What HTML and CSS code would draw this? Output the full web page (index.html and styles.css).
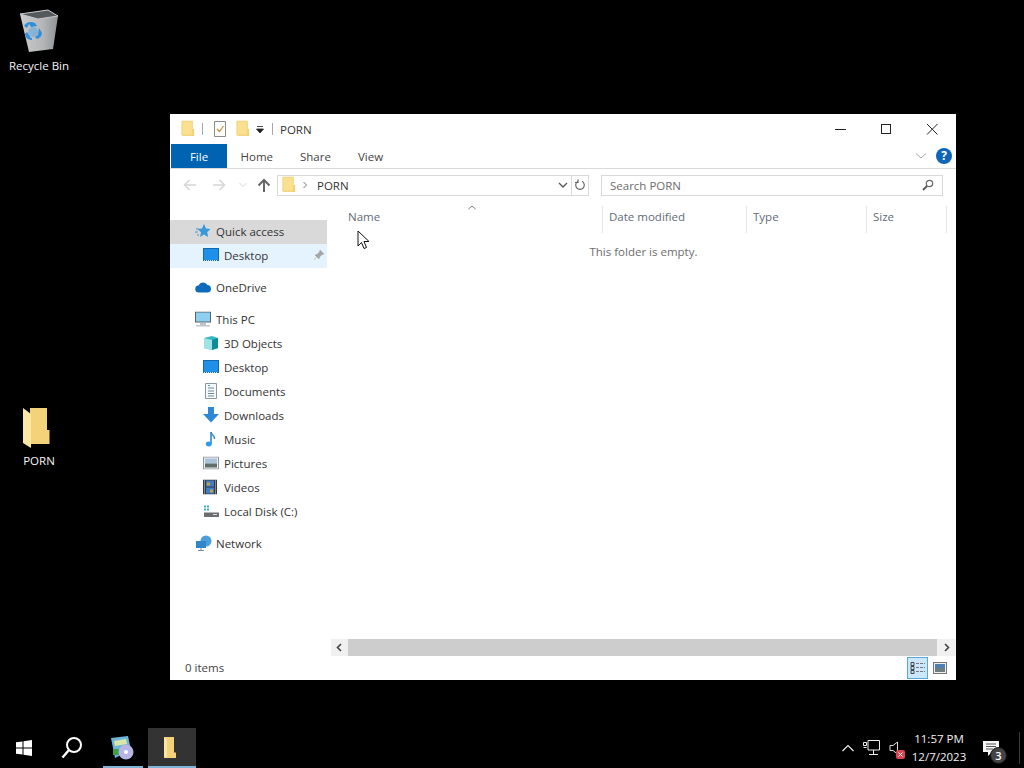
FILE: index.html
```html
<!DOCTYPE html>
<html lang="en">
<head>
  <meta charset="UTF-8" />
  <title>PORN - File Explorer</title>
  <link rel="stylesheet" href="styles.css">
</head>
<body>
  <svg class="defs" width="0" height="0">
    <symbol id="folder" viewBox="0 0 16 20">
      <path d="M1 1h12v16H1z" fill="#fbe08f" stroke="#e9c868" stroke-width=".8"/>
      <path d="M13 10h2v8H3l-2-1h12z" fill="#f3cf72"/>
    </symbol>
    <symbol id="screen" viewBox="0 0 16 14">
      <rect x=".5" y=".5" width="15" height="12" fill="#1e90ea" stroke="#1668a8"/>
      <path d="M1 12.500h14" stroke="#cfe6f7" stroke-dasharray="1 1"/>
    </symbol>
    <linearGradient id="bin" x1="0" x2="1" y1="0" y2="0">
      <stop offset="0" stop-color="#c9cbcd"/>
      <stop offset=".6" stop-color="#b4b6b8"/>
      <stop offset="1" stop-color="#8f9294"/>
    </linearGradient>
  </svg>

  <div class="desk-icon recycle">
    <svg width="40" height="44" viewBox="0 0 40 44">
      <path d="M1 5 29 1l10 6-5 33-24 3z" fill="url(#bin)"/>
      <path d="M1 5 29 1l10 6-20 3z" fill="#55595c" stroke="#c4c6c8"/>
      <path d="M5 17c2-4 7-5 11-3l2 3-6 1-2-3-2 4zM20 19l3 5c0 3-2 5-5 6l-2-2 3-2zM13 31c-4 0-7-3-7-6l2-2 4 6h1z" fill="#2f8fdc"/>
      <circle cx="14" cy="23" r="5" fill="#5aa9e6" opacity=".55"/>
    </svg>
    <span>Recycle Bin</span>
  </div>

  <div class="desk-icon porn">
    <svg width="28" height="40" viewBox="0 0 28 40">
      <path d="M8 0h17v22h2.500v14H8z" fill="#f4d27a"/>
      <path d="M1 0l8 6v34l-8-5z" fill="#fbe6a2"/>
    </svg>
    <span>PORN</span>
  </div>

  <div class="window">
    <div class="titlebar">
      <svg class="qa-folder" width="14" height="18"><use href="#folder"/></svg>
      <i class="qa-sep"></i>
      <svg class="qa-check" width="14" height="18" viewBox="0 0 14 18">
        <path d="M1.500 1.500h11v15h-11z" fill="#fff" stroke="#8b8b8b"/>
        <path d="M4 9l2.500 2.500L10.500 6" fill="none" stroke="#c98b2e" stroke-width="1.200"/>
      </svg>
      <svg class="qa-folder2" width="14" height="18"><use href="#folder"/></svg>
      <svg class="qa-drop" width="8" height="9" viewBox="0 0 8 9"><path d="M1 1.500h6M0.500 4h7L4 8z" stroke="#222" fill="#222" stroke-width=".8"/></svg>
      <i class="qa-sep qa-sep2"></i>
      <span class="title">PORN</span>
      <div class="controls">
        <svg width="46" height="30" viewBox="0 0 46 30"><path d="M18 15.500h11" stroke="#222"/></svg>
        <svg width="46" height="30" viewBox="0 0 46 30"><rect x="18.500" y="10.500" width="9" height="9" fill="none" stroke="#222"/></svg>
        <svg width="46" height="30" viewBox="0 0 46 30"><path d="M18 10l10.500 10.500M28.500 10 18 20.500" stroke="#222"/></svg>
      </div>
    </div>

    <div class="ribbon">
      <span class="tab file">File</span>
      <span class="tab">Home</span>
      <span class="tab">Share</span>
      <span class="tab">View</span>
      <svg class="collapse" width="12" height="8" viewBox="0 0 12 8"><path d="M1 1.500 6 6l5-4.500" fill="none" stroke="#a9a9a9"/></svg>
      <span class="help">?</span>
    </div>

    <div class="addressbar">
      <svg class="nav-btn" width="16" height="14" viewBox="0 0 16 14"><path d="M14 7H3M7.500 2 2.500 7l5 5" fill="none" stroke="#d6d6d6" stroke-width="1.500"/></svg>
      <svg class="nav-btn next" width="16" height="14" viewBox="0 0 16 14"><path d="M2 7h11M8.500 2l5 5-5 5" fill="none" stroke="#d6d6d6" stroke-width="1.500"/></svg>
      <svg class="nav-btn drop" width="8" height="6" viewBox="0 0 8 6"><path d="M.5 1 4 4.500 7.500 1" fill="none" stroke="#d6d6d6"/></svg>
      <svg class="nav-btn up" width="14" height="14" viewBox="0 0 14 14"><path d="M7 14V2M1.500 7.500 7 2l5.500 5.500" fill="none" stroke="#666" stroke-width="2"/></svg>
      <div class="address">
        <svg width="14" height="18"><use href="#folder"/></svg>
        <svg class="crumb" width="6" height="8" viewBox="0 0 6 8"><path d="M1.500 1 4.500 4l-3 3" fill="none" stroke="#777"/></svg>
        <span>PORN</span>
        <svg class="addr-drop" width="10" height="6" viewBox="0 0 10 6"><path d="M1 1l4 4 4-4" fill="none" stroke="#555" stroke-width="1.300"/></svg>
      </div>
      <div class="refresh">
        <svg width="12" height="12" viewBox="0 0 12 12"><path d="M4 2.300A4.300 4.300 0 1 0 8 2.300M4 .5v3H1" fill="none" stroke="#666" stroke-width="1.200"/></svg>
      </div>
      <div class="search">
        <span>Search PORN</span>
        <svg width="12" height="12" viewBox="0 0 12 12"><circle cx="7.500" cy="4.500" r="3.200" fill="none" stroke="#666" stroke-width="1.200"/><path d="M5 7 1 11" stroke="#555" stroke-width="1.800"/></svg>
      </div>
    </div>

    <div class="main">
      <nav class="navpane">
        <div class="row top selected">
          <svg width="16" height="16" viewBox="0 0 16 16"><path d="M9 1l2 4.500 4.500.5-3.300 3.200 1 4.800L9 11.500 5 14l1-4.800L2.500 6l4.500-.5z" fill="#3a97d8"/><path d="M1 6h3M0 9h3M2 12h2" stroke="#3a97d8"/></svg>
          <span>Quick access</span>
        </div>
        <div class="row sub hover">
          <svg width="16" height="14"><use href="#screen"/></svg>
          <span>Desktop</span>
          <svg class="pin" width="12" height="12" viewBox="0 0 12 12"><path d="M7 1l4 4-2 .5L6.500 8 6 10 2 6l2-.5L6.500 3z M3.500 8 1 11" fill="#a5a5a5" stroke="#a5a5a5" stroke-width=".6"/></svg>
        </div>

        <div class="row top gap">
          <svg width="17" height="12" viewBox="0 0 17 12"><path d="M4 11.500a3.500 3.500 0 0 1-.5-7A5 5 0 0 1 12.500 4a3.800 3.800 0 0 1 .5 7.500z" fill="#0f6cbd"/></svg>
          <span>OneDrive</span>
        </div>

        <div class="row top gap">
          <svg width="16" height="15" viewBox="0 0 16 15"><rect x=".5" y=".5" width="15" height="10" fill="#8fd0f2" stroke="#58636d"/><path d="M5 12.500h6M1 14.500h14" stroke="#7e8b96"/></svg>
          <span>This PC</span>
        </div>
        <div class="row sub">
          <svg width="16" height="16" viewBox="0 0 16 16"><path d="M1 3l8-2 6 2v10l-6 2-8-2z" fill="#37b6c4"/><path d="M1 3l8 2v10l-8-2z" fill="#9fe3e6"/><path d="M9 5l6-2v10l-6 2z" fill="#0e8a9d"/></svg>
          <span>3D Objects</span>
        </div>
        <div class="row sub">
          <svg width="16" height="14"><use href="#screen"/></svg>
          <span>Desktop</span>
        </div>
        <div class="row sub">
          <svg width="16" height="16" viewBox="0 0 12 16"><path d="M.5.500h11v15H.500z" fill="#f6f8fa" stroke="#8a97a3"/><path d="M3 5h6M3 8h6M3 10.500h6M3 13h6" stroke="#6f8aa3"/><path d="M3 2.500h2" stroke="#3a97d8"/></svg>
          <span>Documents</span>
        </div>
        <div class="row sub">
          <svg width="16" height="16" viewBox="0 0 16 16"><path d="M5 0h6v7h5l-8 8.500L0 7h5z" fill="#2f87d8"/></svg>
          <span>Downloads</span>
        </div>
        <div class="row sub">
          <svg width="16" height="16" viewBox="0 0 16 16"><path d="M8 1v11.500" stroke="#2f87d8" stroke-width="1.600"/><path d="M8 1c.5 3 4 3.500 3.500 7" fill="none" stroke="#2f87d8" stroke-width="1.400"/><ellipse cx="5.800" cy="13" rx="3" ry="2.400" fill="#2f9be0"/></svg>
          <span>Music</span>
        </div>
        <div class="row sub">
          <svg width="16" height="13" viewBox="0 0 16 13"><rect x=".5" y=".5" width="15" height="12" fill="#eef1f3" stroke="#8e9499"/><rect x="2" y="2" width="12" height="5" fill="#a9c3da"/><rect x="2" y="7" width="12" height="4" fill="#5f6e6b"/></svg>
          <span>Pictures</span>
        </div>
        <div class="row sub">
          <svg width="14" height="15" viewBox="0 0 14 15"><rect width="14" height="15" fill="#333b42"/><rect x="3" y="1" width="8" height="6" fill="#3f7fc9"/><rect x="3" y="8" width="8" height="6" fill="#3f7fc9"/><path d="M4 3h3v3H4zM7 10h3v3H7z" fill="#c9a13a"/><path d="M1.500 1v13M12.500 1v13" stroke="#ddd" stroke-dasharray="1 1"/></svg>
          <span>Videos</span>
        </div>
        <div class="row sub">
          <svg width="16" height="13" viewBox="0 0 16 13"><path d="M1 1h2v2H1zM4 1h2v2H4zM1 4h2v2H1zM4 4h2v2H4z" fill="#35b4c6"/><rect x="1" y="8" width="15" height="4.500" fill="#6b6f72"/><path d="M10 10h4" stroke="#ddd"/></svg>
          <span>Local Disk (C:)</span>
        </div>

        <div class="row top gap">
          <svg width="17" height="16" viewBox="0 0 17 16"><circle cx="11" cy="6" r="5.500" fill="#4d9fdc"/><rect x="1" y="6" width="10" height="7" fill="#2f87c9"/><path d="M6 13v2M3 15.500h6" stroke="#7e8b96"/></svg>
          <span>Network</span>
        </div>
      </nav>

      <section class="content">
        <div class="sort-caret"><svg width="8" height="5" viewBox="0 0 8 5"><path d="M.5 4 4 1l3.500 3" fill="none" stroke="#777"/></svg></div>
        <div class="columns">
          <span class="col col-name">Name</span>
          <span class="col col-date">Date modified</span>
          <span class="col col-type">Type</span>
          <span class="col col-size">Size</span>
        </div>
        <p class="empty">This folder is empty.</p>
        <div class="hscroll">
          <svg width="17" height="17" viewBox="0 0 17 17"><path d="M10 5 6.500 8.500 10 12" fill="none" stroke="#444" stroke-width="1.600"/></svg>
          <div class="thumb"></div>
          <svg width="17" height="17" viewBox="0 0 17 17"><path d="M6 5l3.500 3.500L6 12" fill="none" stroke="#444" stroke-width="1.600"/></svg>
        </div>
      </section>
    </div>

    <div class="statusbar">
      <span class="count">0 items</span>
      <div class="views">
        <span class="view on">
          <svg width="16" height="14" viewBox="0 0 16 14"><path d="M1 1.500h3v3H1zM1 5.500h3v3H1zM1 9.500h3v3H1z" fill="none" stroke="#444"/><path d="M6 2.500h9M6 6.500h9M6 10.500h9" stroke="#777" stroke-dasharray="3 1"/></svg>
        </span>
        <span class="view">
          <svg width="14" height="12" viewBox="0 0 14 12"><rect x=".5" y=".5" width="13" height="11" fill="#eef1f3" stroke="#777"/><rect x="2" y="2" width="10" height="4" fill="#4f80b0"/><rect x="2" y="6" width="10" height="4" fill="#6f7f7f"/></svg>
        </span>
      </div>
    </div>
  </div>

  <svg class="pointer" width="14" height="20" viewBox="0 0 14 20"><path d="M1 1v15l3.500-3.500 2.500 6 2.500-1-2.500-6H12z" fill="#fff" stroke="#111"/></svg>

  <footer class="taskbar">
    <div class="task">
      <svg width="16" height="16" viewBox="0 0 16 16"><path d="M0 2.300 6.500 1.400v6.100H0zM7.500 1.300 16 0v7.500H7.500zM0 8.500h6.500v6.100L0 13.700zM7.500 8.500H16V16l-8.500-1.300z" fill="#fff"/></svg>
    </div>
    <div class="task">
      <svg width="22" height="24" viewBox="0 0 22 24"><circle cx="13" cy="9" r="7" fill="none" stroke="#fff" stroke-width="2"/><path d="M8 14 1.500 21.500" stroke="#fff" stroke-width="2.400"/></svg>
    </div>
    <div class="task open app">
      <svg width="26" height="26" viewBox="0 0 26 26"><path d="M2 3l17-2 3 14-16 8z" fill="#6fb5d8"/><path d="M5 6l12-2 1 5-12 2z" fill="#d9e8a8"/><rect x="4" y="14" width="6" height="6" fill="#3fa04a"/><circle cx="17" cy="17" r="7.500" fill="#b7b4e6"/><circle cx="17" cy="17" r="2" fill="#fff"/></svg>
    </div>
    <div class="task open active">
      <svg width="14" height="22" viewBox="0 0 14 20" preserveAspectRatio="none"><path d="M1 0h10v14h2v5H1z" fill="#f4d27a"/><path d="M1 0l3 3v16l-3-2z" fill="#fbe6a2"/></svg>
    </div>

    <div class="tray">
      <svg width="14" height="8" viewBox="0 0 14 8"><path d="M1.500 7 7 1.500 12.500 7" fill="none" stroke="#eee" stroke-width="1.200"/></svg>
      <svg class="tray-net" width="17" height="16" viewBox="0 0 17 16"><path d="M.5 2.500h3v3h-3zM.5 7.500h3" fill="none" stroke="#eee"/><path d="M5 .5h11.500v9.500H5M5 .5v9.500M10.500 10v4M6 14.500h9" fill="none" stroke="#eee"/></svg>
      <span class="tray-sound">
        <svg width="12" height="14" viewBox="0 0 12 14"><path d="M1 4.500h3L8.500 1v12L4 9.500H1z" fill="none" stroke="#ddd"/></svg>
        <svg class="muted" width="9" height="9" viewBox="0 0 9 9"><rect width="9" height="9" rx="2" fill="#d8464f"/><path d="M2.500 2.500l4 4M6.500 2.500l-4 4" stroke="#fff"/></svg>
      </span>
      <div class="clock">
        <span>11:57 PM</span>
        <span>12/7/2023</span>
      </div>
      <div class="notify">
        <svg width="16" height="15" viewBox="0 0 16 15"><path d="M0 0h16v11h-7l-4 4v-4H0z" fill="#f4f4f4"/><path d="M3 3h10M3 5.500h10M3 8h7" stroke="#555"/></svg>
        <b class="badge">3</b>
      </div>
    </div>
  </footer>
</body>
</html>
```

FILE: styles.css
```css
html, body {
  margin: 0;
  height: 100%;
}
body {
  width: 1024px;
  height: 768px;
  background: #000;
  overflow: hidden;
  position: relative;
  font-family: "Open Sans", "Liberation Sans", sans-serif;
  font-size: 11.500px;
  color: #333;
}
.defs {
  position: absolute;
}
svg {
  display: block;
  flex: none;
}

/* desktop icons */
.desk-icon {
  position: absolute;
  left: 0;
  width: 78px;
  display: flex;
  flex-direction: column;
  align-items: center;
  color: #f4f4f4;
}
.desk-icon span {
  line-height: 16px;
}
.recycle {
  top: 9px;
}
.recycle span {
  margin-top: 5px;
}
.porn {
  top: 408px;
}
.porn svg {
  margin-right: 6px;
}
.porn span {
  margin-top: 5px;
}

/* window */
.window {
  position: absolute;
  left: 170px;
  top: 114px;
  width: 786px;
  height: 566px;
  background: #fff;
  display: flex;
  flex-direction: column;
}
.titlebar {
  height: 30px;
  display: flex;
  align-items: center;
  padding-left: 11px;
}
.qa-sep {
  width: 1px;
  height: 12px;
  background: #a8a8a8;
  margin: 0 10px 0 7px;
}
.qa-folder2 {
  margin-left: 9px;
}
.qa-drop {
  margin-left: 6px;
}
.qa-sep2 {
  margin: 0 7px 0 8px;
}
.controls {
  margin-left: auto;
  display: flex;
  padding-right: 1px;
}

.ribbon {
  height: 24px;
  border-bottom: 1px solid #d9d9d9;
  display: flex;
  align-items: center;
  padding-left: 1px;
}
.tab {
  padding: 0 13.500px;
  height: 24px;
  line-height: 26px;
  color: #444;
}
.tab.file {
  width: 56px;
  box-sizing: border-box;
  padding: 0;
  text-align: center;
  background: #0063b1;
  color: #fff;
}
.collapse {
  margin-left: auto;
}
.help {
  width: 16px;
  height: 16px;
  margin: 0 4px 0 9px;
  border-radius: 50%;
  background: #0f66b8;
  color: #fff;
  font-weight: 700;
  font-size: 12px;
  line-height: 16px;
  text-align: center;
}

.addressbar {
  height: 32px;
  margin-bottom: 4px;
  display: flex;
  align-items: center;
  padding: 0 13px 0 12px;
}
.nav-btn.next {
  margin-left: 13px;
}
.nav-btn.drop {
  margin-left: 12px;
}
.nav-btn.up {
  margin: 0 6px 0 10px;
}
.address {
  width: 295px;
  height: 21px;
  box-sizing: border-box;
  border: 1px solid #d9d9d9;
  display: flex;
  align-items: center;
  padding-left: 4px;
  flex: none;
}
.crumb {
  margin: 0 9px 0 6px;
}
.addr-drop {
  margin-left: auto;
  margin-right: 3px;
}
.refresh {
  width: 17px;
  height: 21px;
  box-sizing: border-box;
  border: 1px solid #d9d9d9;
  border-left: 0;
  display: flex;
  align-items: center;
  justify-content: center;
}
.search {
  width: 342px;
  height: 21px;
  box-sizing: border-box;
  border: 1px solid #d9d9d9;
  margin-left: 12px;
  padding: 0 8px;
  display: flex;
  align-items: center;
  justify-content: space-between;
  color: #6d6d6d;
}

.main {
  flex: 1;
  display: flex;
  min-height: 0;
}
.navpane {
  width: 157px;
  padding-top: 15px;
  margin-right: 4px;
  flex: none;
}
.row {
  height: 24px;
  display: flex;
  align-items: center;
  position: relative;
}
.row svg {
  position: absolute;
  top: 50%;
  transform: translateY(calc(-50% - 1px));
}
.row span {
  margin-bottom: 2px;
}
.row.top svg {
  left: 25px;
}
.row.sub svg {
  left: 33px;
}
.row.top span {
  margin-left: 46px;
}
.row.sub span {
  margin-left: 54px;
}
.row.gap {
  margin-top: 8px;
}
.row.selected {
  background: #d9d9d9;
}
.row.hover {
  background: #e5f3ff;
}
.row.sub svg.pin {
  left: 143px;
}

.content {
  flex: 1;
  display: flex;
  flex-direction: column;
  position: relative;
  min-width: 0;
}
.sort-caret {
  position: absolute;
  left: 137px;
  top: 0;
}
.columns {
  height: 27px;
  margin-top: 1px;
  display: grid;
  grid-template-columns: 272px 144px 120px 80px;
  color: #5f6b76;
}
.col {
  line-height: 21px;
  padding-left: 6px;
  border-right: 1px solid #e5e5e5;
}
.col-name {
  padding-left: 17px;
}
.empty {
  margin: 11px 0 0;
  text-align: center;
  width: 625px;
  color: #6d6d6d;
  line-height: 16px;
}
.hscroll {
  margin-top: auto;
  height: 17px;
  display: flex;
  background: #f0f0f0;
}
.thumb {
  flex: 1;
  background: #cdcdcd;
  margin-right: 2px;
}

.statusbar {
  height: 24px;
  display: flex;
  align-items: center;
  justify-content: space-between;
  padding: 0 6px 0 15px;
  color: #444;
}
.count {
  margin-bottom: 2px;
}
.views {
  display: flex;
  gap: 1px;
}
.view {
  width: 21px;
  height: 22px;
  box-sizing: border-box;
  display: flex;
  align-items: center;
  justify-content: center;
}
.view.on {
  background: #cce8ff;
  border: 1px solid #57a8d8;
}

.pointer {
  position: absolute;
  left: 357px;
  top: 230px;
}

/* taskbar */
.taskbar {
  position: absolute;
  left: 0;
  right: 0;
  bottom: 0;
  height: 40px;
  background: #000;
  display: flex;
}
.task {
  width: 48px;
  height: 40px;
  display: flex;
  align-items: center;
  justify-content: center;
  position: relative;
}
.task.app {
  width: 52px;
}
.task.active svg {
  margin-right: 4px;
}
.task.open::after {
  content: "";
  position: absolute;
  left: 0;
  right: 0;
  bottom: 0;
  height: 2px;
  background: #7fb4d8;
}
.task.app::after {
  left: 7px;
  right: 5px;
}
.task.active {
  background: #333;
}
.tray {
  margin-left: auto;
  display: flex;
  align-items: center;
  color: #f2f2f2;
  padding-right: 14px;
  position: relative;
}
.tray::after {
  content: "";
  position: absolute;
  right: 4px;
  top: 4px;
  bottom: 4px;
  width: 1px;
  background: #3a3a3a;
}
.tray-net {
  margin-left: 8px;
}
.tray-sound {
  margin-left: 9px;
  position: relative;
}
.muted {
  position: absolute;
  left: 7px;
  top: 9px;
}
.clock {
  width: 74px;
  margin-left: 1px;
  display: flex;
  flex-direction: column;
  align-items: center;
  line-height: 18px;
}
.notify {
  margin-left: 7px;
  width: 27px;
  position: relative;
  height: 24px;
  display: flex;
  align-items: center;
}
.badge {
  position: absolute;
  left: 7px;
  top: 11px;
  width: 15px;
  height: 15px;
  border-radius: 50%;
  background: #444;
  border: 1px solid #111;
  color: #fff;
  font-size: 11px;
  font-weight: 600;
  line-height: 15px;
  text-align: center;
}
```
